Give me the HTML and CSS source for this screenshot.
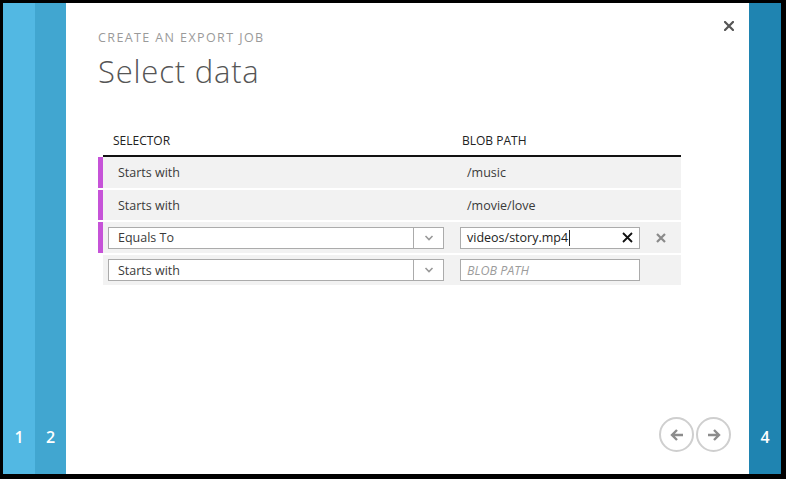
FILE: index.html
```html
<!DOCTYPE html>
<html>
<head>
<meta charset="utf-8">
<link rel="stylesheet" href="styles.css">
</head>
<body>
<div class="frame">
  <div class="strip s1"><span class="num">1</span></div>
  <div class="strip s2"><span class="num">2</span></div>
  <div class="main">
    <div class="top">
      <div class="heading">
        <div class="kicker">CREATE AN EXPORT JOB</div>
        <h1 class="title">Select data</h1>
      </div>
      <button class="close" aria-label="close">
        <svg width="10" height="10" viewBox="0 0 10 10"><path d="M1 1L9 9M9 1L1 9" stroke="#555" stroke-width="2.2" stroke-linecap="square"/></svg>
      </button>
    </div>
    <div class="table">
      <div class="row head">
        <div class="mark none"></div>
        <div class="cells">
          <div class="hcell sel">SELECTOR</div>
          <div class="hcell blob">BLOB PATH</div>
          <div></div>
        </div>
      </div>
      <div class="row tall">
        <div class="mark"></div>
        <div class="cells">
          <div class="static sel">Starts with</div>
          <div class="static blob">/music</div>
          <div></div>
        </div>
      </div>
      <div class="row">
        <div class="mark"></div>
        <div class="cells">
          <div class="static sel">Starts with</div>
          <div class="static blob">/movie/love</div>
          <div></div>
        </div>
      </div>
      <div class="row tall">
        <div class="mark"></div>
        <div class="cells">
          <div class="select">
            <span class="val">Equals To</span>
            <span class="chev"><svg width="10" height="6" viewBox="0 0 10 6"><path d="M1.5 1L5 4.5L8.5 1" fill="none" stroke="#999" stroke-width="1.6"/></svg></span>
          </div>
          <div class="input">
            <span class="txt">videos/story.mp4</span><span class="caret"></span>
            <span class="clear"><svg width="11" height="11" viewBox="0 0 11 11"><path d="M1 1L10 10M10 1L1 10" stroke="#111" stroke-width="1.8"/></svg></span>
          </div>
          <div class="del"><svg width="10" height="10" viewBox="0 0 10 10"><path d="M1 1L9 9M9 1L1 9" stroke="#8a8a8a" stroke-width="2.2"/></svg></div>
        </div>
      </div>
      <div class="row">
        <div class="mark none"></div>
        <div class="cells">
          <div class="select">
            <span class="val">Starts with</span>
            <span class="chev"><svg width="10" height="6" viewBox="0 0 10 6"><path d="M1.5 1L5 4.5L8.5 1" fill="none" stroke="#999" stroke-width="1.6"/></svg></span>
          </div>
          <div class="input">
            <span class="ph">BLOB PATH</span>
          </div>
          <div></div>
        </div>
      </div>
    </div>
    <div class="fill"></div>
    <div class="nav">
      <button class="circ" aria-label="back">
        <svg width="16" height="14" viewBox="0 0 16 14"><path d="M14 7H3M8 2L3 7L8 12" fill="none" stroke="#8c8c8c" stroke-width="2.4"/></svg>
      </button>
      <button class="circ" aria-label="next">
        <svg width="16" height="14" viewBox="0 0 16 14"><path d="M2 7H13M8 2L13 7L8 12" fill="none" stroke="#8c8c8c" stroke-width="2.4"/></svg>
      </button>
    </div>
  </div>
  <div class="strip s4"><span class="num">4</span></div>
</div>
</body>
</html>
```
FILE: styles.css
```css
html, body {
  margin: 0;
  padding: 0;
  background: #000;
  height: 100%;
}
body {
  font-family: "Open Sans", "Noto Sans", "DejaVu Sans", sans-serif;
  overflow: hidden;
}
.frame {
  margin: 3px 5px 5px 3px;
  height: 471px;
  display: flex;
}
.strip {
  display: flex;
  flex-direction: column;
  justify-content: flex-end;
  align-items: center;
  padding-bottom: 27px;
  box-sizing: border-box;
}
.s1 { width: 32px; background: #52b8e3; }
.s2 { width: 31px; background: #41a6d0; }
.s4 { width: 32px; background: #1f84b1; }
.num {
  color: #fff;
  font-size: 16px;
  font-weight: 600;
  line-height: 20px;
}
.main {
  flex: 1;
  background: #fff;
  display: flex;
  flex-direction: column;
  padding: 16px 15px 22px 32px;
  box-sizing: border-box;
}
.top {
  display: flex;
  justify-content: space-between;
  align-items: flex-start;
}
.heading {
  padding-top: 11px;
}
.kicker {
  font-size: 12.5px;
  color: #9a9a9a;
  line-height: 16px;
  letter-spacing: 1.4px;
}
.title {
  margin: 6px 0 0 0;
  font-size: 31px;
  font-weight: 300;
  color: #555;
  line-height: 38px;
  letter-spacing: 0.8px;
}
.close {
  border: 0;
  background: none;
  padding: 0;
  width: 10px;
  height: 10px;
  margin-top: 2px;
  display: flex;
}
.table {
  width: 583px;
  margin-top: 40px;
  display: flex;
  flex-direction: column;
}
.row {
  display: flex;
  height: 30px;
}
.row + .row {
  margin-top: 2px;
}
.head + .row {
  margin-top: 0;
}
.row.tall {
  height: 31px;
}
.row.head {
  height: 27px;
}
.mark {
  width: 5px;
  background: #c653d8;
}
.mark.none {
  background: transparent;
}
.cells {
  flex: 1;
  background: #f2f2f2;
  display: grid;
  grid-template-columns: 336px 180px 1fr;
  column-gap: 16px;
  padding-left: 5px;
  align-items: center;
  font-size: 12.5px;
  color: #3a3a3a;
}
.head .cells {
  background: transparent;
  border-bottom: 2px solid #111;
  align-items: start;
  padding-top: 3px;
}
.hcell {
  font-size: 12px;
  color: #222;
  line-height: 16px;
}
.hcell.sel { padding-left: 5px; }
.hcell.blob { padding-left: 2px; }
.static.sel { padding-left: 10px; }
.static.blob { padding-left: 7px; }
.select {
  height: 22px;
  border: 1px solid #ababab;
  background: #fff;
  display: flex;
  box-sizing: border-box;
  align-items: center;
}
.select .val {
  flex: 1;
  padding-left: 9px;
}
.chev {
  width: 29px;
  height: 100%;
  border-left: 1px solid #ababab;
  display: flex;
  align-items: center;
  justify-content: center;
}
.input {
  height: 22px;
  border: 1px solid #ababab;
  background: #fff;
  box-sizing: border-box;
  display: flex;
  align-items: center;
  padding-left: 6px;
  padding-right: 6px;
  color: #222;
}
.caret {
  width: 1px;
  height: 16px;
  background: #222;
  margin-left: 1px;
}
.clear {
  margin-left: auto;
  display: flex;
}
.ph {
  font-style: italic;
  color: #9c9c9c;
}
.del {
  display: flex;
  padding-left: 0;
}
.fill { flex: 1; }
.nav {
  display: flex;
  justify-content: flex-end;
  gap: 2px;
  padding-right: 3px;
}
.circ {
  width: 35px;
  height: 35px;
  border-radius: 50%;
  border: 2px solid #cfcfcf;
  background: #fff;
  padding: 0;
  display: flex;
  align-items: center;
  justify-content: center;
  box-sizing: border-box;
}
```
